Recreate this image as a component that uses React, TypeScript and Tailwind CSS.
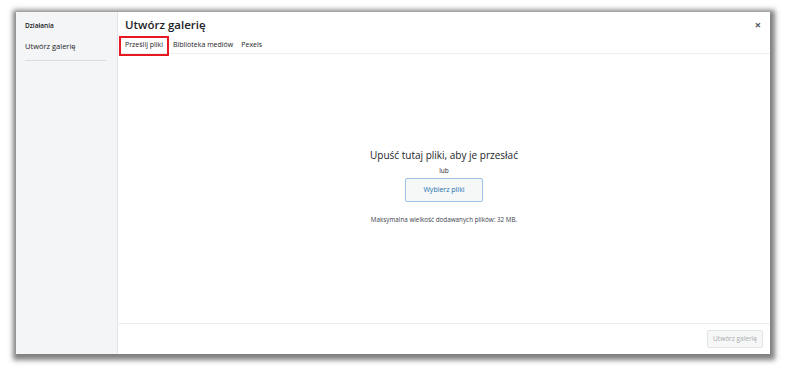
import React from "react";

export default function App() {
  const font = { fontFamily: '"Open Sans", "Noto Sans", sans-serif' };
  return (
    <div className="w-[786px] h-[366px] bg-white pt-[12px] pl-[16px]" style={font}>
      <div className="w-[754px] h-[342px] bg-white flex shadow-[1px_2px_5px_4px_rgba(0,0,0,0.5)]">
        {/* Sidebar */}
        <div className="w-[102px] h-full bg-[#f3f5f6] border-r border-[#e2e4e7] pl-[9px] pr-[11px] pt-[10px]">
          <div className="text-[6.5px] font-semibold text-[#1d2327] leading-[8px]">Działania</div>
          <div className="mt-[12px] text-[7.5px] font-medium text-[#1d2327] leading-[9px]">Utwórz galerię</div>
          <div className="mt-[9px] border-t border-[#dcdcde]" />
        </div>
        {/* Main */}
        <div className="flex-1 flex flex-col">
          <div className="h-[42px] border-b border-[#eeeeee] pl-[7px] pr-[9px] flex flex-col">
            <div className="flex items-center justify-between h-[25px] pt-[1px]">
              <div className="text-[11.5px] font-semibold text-[#1d2327] leading-none">Utwórz galerię</div>
              <div className="text-[11px] font-bold text-[#50575e] leading-none">×</div>
            </div>
            <div className="flex items-center -ml-[6px] h-[17px] pt-[2px]">
              <div className="border-2 border-[#e5191f] px-[4px] h-[20px] flex items-center text-[7px] text-[#1d2327]">Prześlij pliki</div>
              <div className="px-[4px] text-[7px] text-[#1d2327]">Biblioteka mediów</div>
              <div className="px-[4px] text-[7px] text-[#1d2327]">Pexels</div>
            </div>
          </div>
          <div className="flex-1 flex flex-col items-center pt-[94px]">
            <div className="text-[10px] text-[#1d2327] leading-[14px]">Upuść tutaj pliki, aby je przesłać</div>
            <div className="mt-[5px] text-[6.5px] text-[#1d2327] leading-[8px]">lub</div>
            <div className="mt-[3px] w-[78px] h-[24px] border border-[#9ec2e6] rounded-[2px] bg-[#f6f7f7] flex items-center justify-center text-[7px] text-[#2271b1]">Wybierz pliki</div>
            <div className="mt-[14px] text-[6.3px] text-[#3c434a] leading-[8px]">Maksymalna wielkość dodawanych plików: 32 MB.</div>
          </div>
          <div className="h-[31px] border-t border-[#eeeeee] flex items-center justify-end pr-[7px]">
            <div className="w-[56px] h-[18px] border border-[#e2e4e7] rounded-[2px] bg-[#f6f7f7] flex items-center justify-center text-[6.5px] text-[#a7aaad]">Utwórz galerię</div>
          </div>
        </div>
      </div>
    </div>
  );
}
